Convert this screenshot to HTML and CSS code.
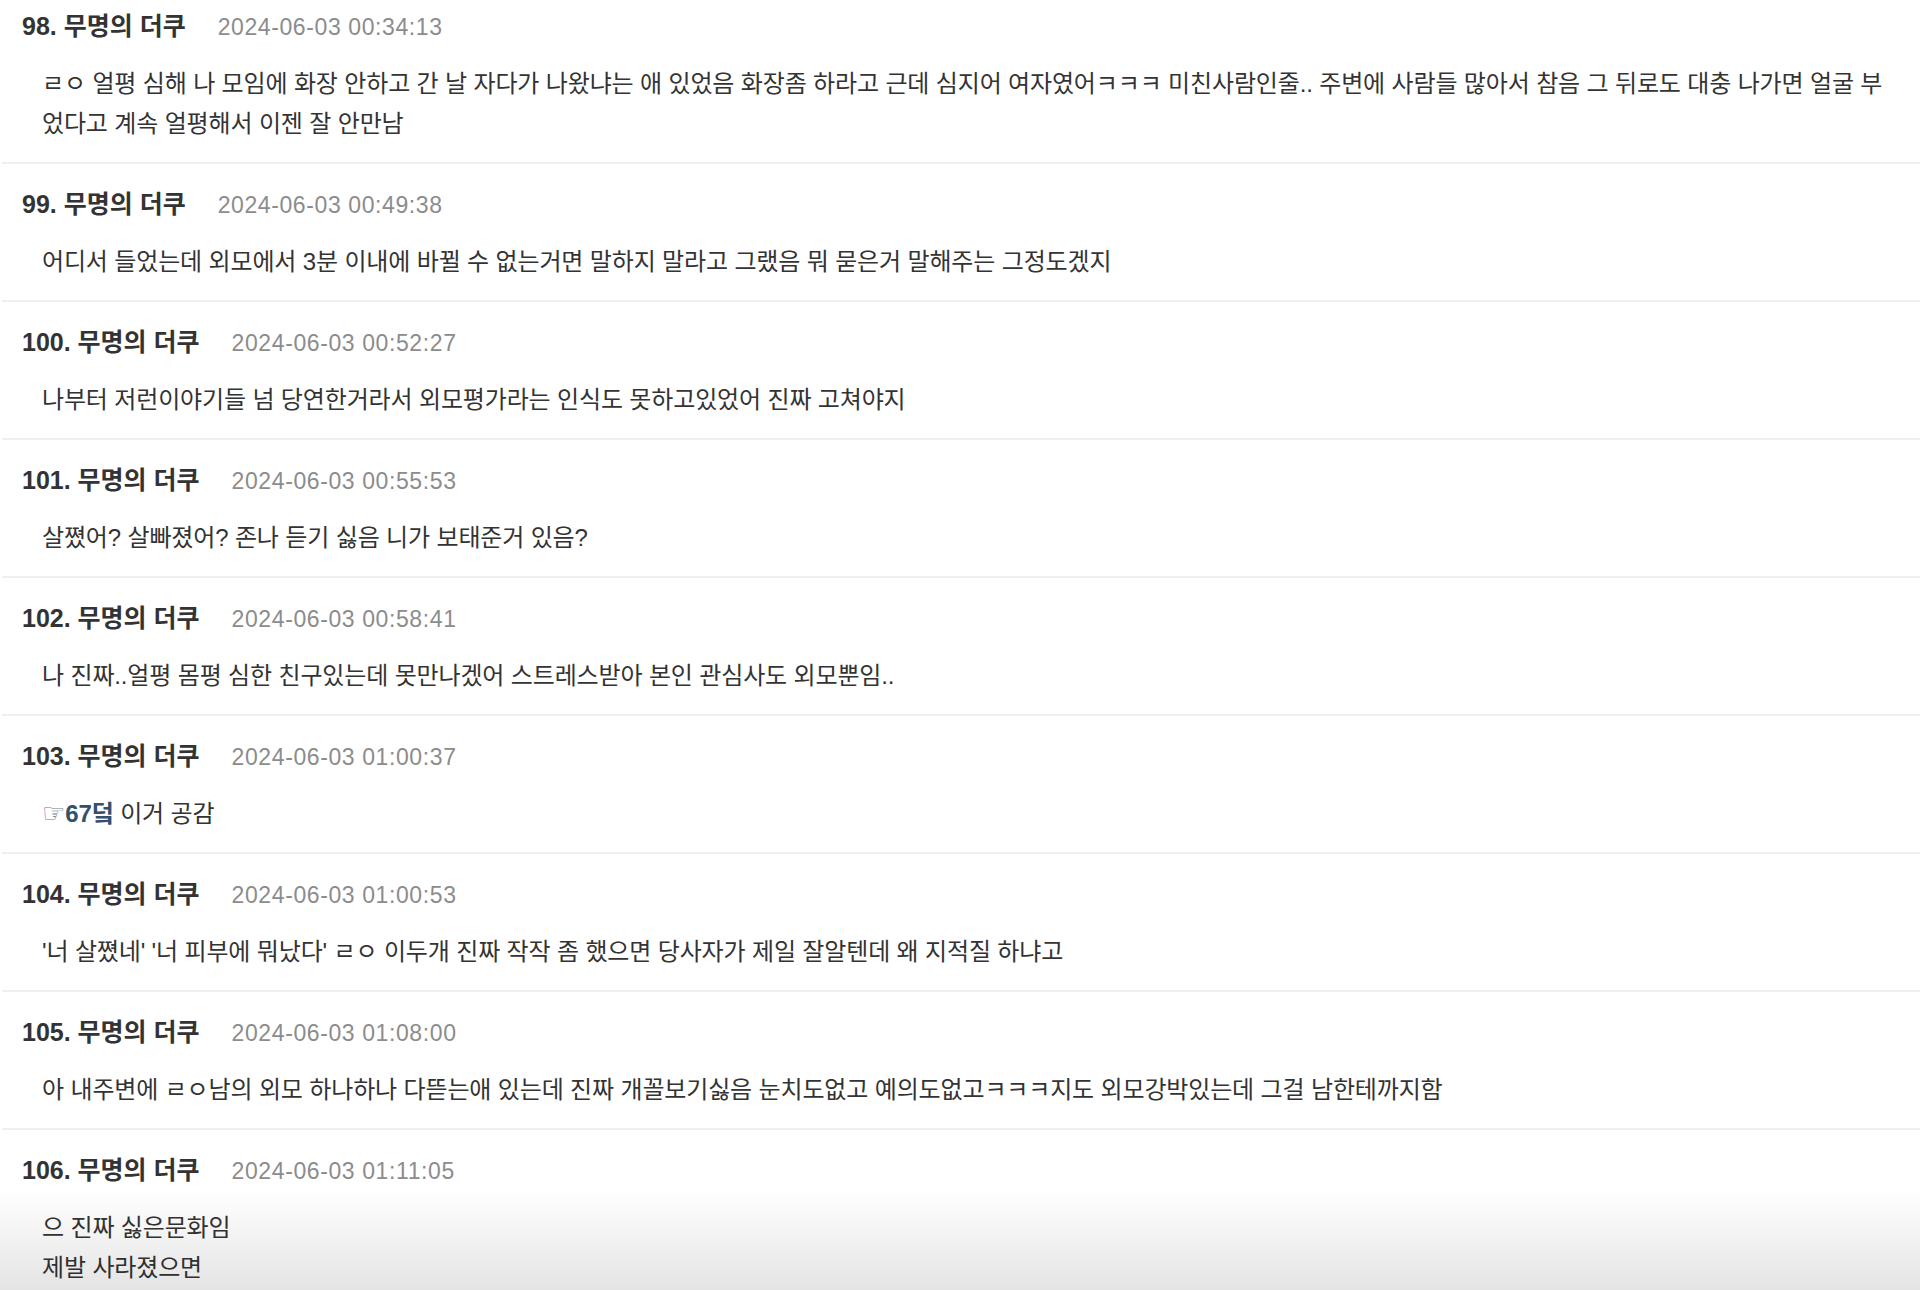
FILE: index.html
```html
<!DOCTYPE html>
<html lang="ko">
<head>
<meta charset="utf-8">
<title>댓글</title>
<link rel="stylesheet" href="styles.css">
</head>
<body>
<div class="comments">
  <div class="comment">
    <div class="comment-head"><span class="comment-no">98. 무명의 더쿠</span><span class="comment-date">2024-06-03 00:34:13</span></div>
    <div class="comment-body">ㄹㅇ 얼평 심해 나 모임에 화장 안하고 간 날 자다가 나왔냐는 애 있었음 화장좀 하라고 근데 심지어 여자였어ㅋㅋㅋ 미친사람인줄.. 주변에 사람들 많아서 참음 그 뒤로도 대충 나가면 얼굴 부었다고 계속 얼평해서 이젠 잘 안만남</div>
  </div>
  <div class="comment">
    <div class="comment-head"><span class="comment-no">99. 무명의 더쿠</span><span class="comment-date">2024-06-03 00:49:38</span></div>
    <div class="comment-body">어디서 들었는데 외모에서 3분 이내에 바뀔 수 없는거면 말하지 말라고 그랬음 뭐 묻은거 말해주는 그정도겠지</div>
  </div>
  <div class="comment">
    <div class="comment-head"><span class="comment-no">100. 무명의 더쿠</span><span class="comment-date">2024-06-03 00:52:27</span></div>
    <div class="comment-body">나부터 저런이야기들 넘 당연한거라서 외모평가라는 인식도 못하고있었어 진짜 고쳐야지</div>
  </div>
  <div class="comment">
    <div class="comment-head"><span class="comment-no">101. 무명의 더쿠</span><span class="comment-date">2024-06-03 00:55:53</span></div>
    <div class="comment-body">살쪘어? 살빠졌어? 존나 듣기 싫음 니가 보태준거 있음?</div>
  </div>
  <div class="comment">
    <div class="comment-head"><span class="comment-no">102. 무명의 더쿠</span><span class="comment-date">2024-06-03 00:58:41</span></div>
    <div class="comment-body">나 진짜..얼평 몸평 심한 친구있는데 못만나겠어 스트레스받아 본인 관심사도 외모뿐임..</div>
  </div>
  <div class="comment">
    <div class="comment-head"><span class="comment-no">103. 무명의 더쿠</span><span class="comment-date">2024-06-03 01:00:37</span></div>
    <div class="comment-body"><span class="hand">☞</span><a class="reply-link" href="#">67덬</a> 이거 공감</div>
  </div>
  <div class="comment">
    <div class="comment-head"><span class="comment-no">104. 무명의 더쿠</span><span class="comment-date">2024-06-03 01:00:53</span></div>
    <div class="comment-body">'너 살쪘네' '너 피부에 뭐났다' ㄹㅇ 이두개 진짜 작작 좀 했으면 당사자가 제일 잘알텐데 왜 지적질 하냐고</div>
  </div>
  <div class="comment">
    <div class="comment-head"><span class="comment-no">105. 무명의 더쿠</span><span class="comment-date">2024-06-03 01:08:00</span></div>
    <div class="comment-body">아 내주변에 ㄹㅇ남의 외모 하나하나 다뜯는애 있는데 진짜 개꼴보기싫음 눈치도없고 예의도없고ㅋㅋㅋ지도 외모강박있는데 그걸 남한테까지함</div>
  </div>
  <div class="comment">
    <div class="comment-head"><span class="comment-no">106. 무명의 더쿠</span><span class="comment-date">2024-06-03 01:11:05</span></div>
    <div class="comment-body">으 진짜 싫은문화임<br>제발 사라졌으면</div>
  </div>
</div>
<div class="bottom-fade"></div>
</body>
</html>
```
FILE: styles.css
```css
html, body {
  margin: 0;
  padding: 0;
  background: #ffffff;
  overflow: hidden;
}

body {
  font-family: "Liberation Sans", "Noto Sans CJK KR", sans-serif;
  color: #333333;
  height: 1290px;
}

.comments {
  margin: -14px 0 0 2px;
}

.comment {
  padding: 25px 30px 18px 20px;
  border-bottom: 2px solid #eeeeee;
}

.comment-head {
  display: flex;
  align-items: baseline;
  gap: 32px;
  height: 30px;
  line-height: 30px;
}

.comment-no {
  font-size: 25px;
  font-weight: bold;
  color: #333333;
}

.comment-date {
  font-size: 23px;
  color: #8c8c8c;
  letter-spacing: 0.6px;
}

.comment-body {
  margin-top: 23px;
  padding-left: 20px;
  font-size: 24px;
  line-height: 40px;
  letter-spacing: -0.15px;
  color: #333333;
}

.hand {
  font-family: "DejaVu Sans", sans-serif;
  font-size: 26px;
  line-height: 0;
  color: #6f7b88;
  letter-spacing: 0;
}

.reply-link {
  color: #34506f;
  font-weight: bold;
  text-decoration: none;
}

.bottom-fade {
  position: fixed;
  left: 0;
  right: 0;
  bottom: 0;
  height: 100px;
  background: linear-gradient(to bottom, #ffffff, #e4e4e4);
  mix-blend-mode: multiply;
  pointer-events: none;
}
```
